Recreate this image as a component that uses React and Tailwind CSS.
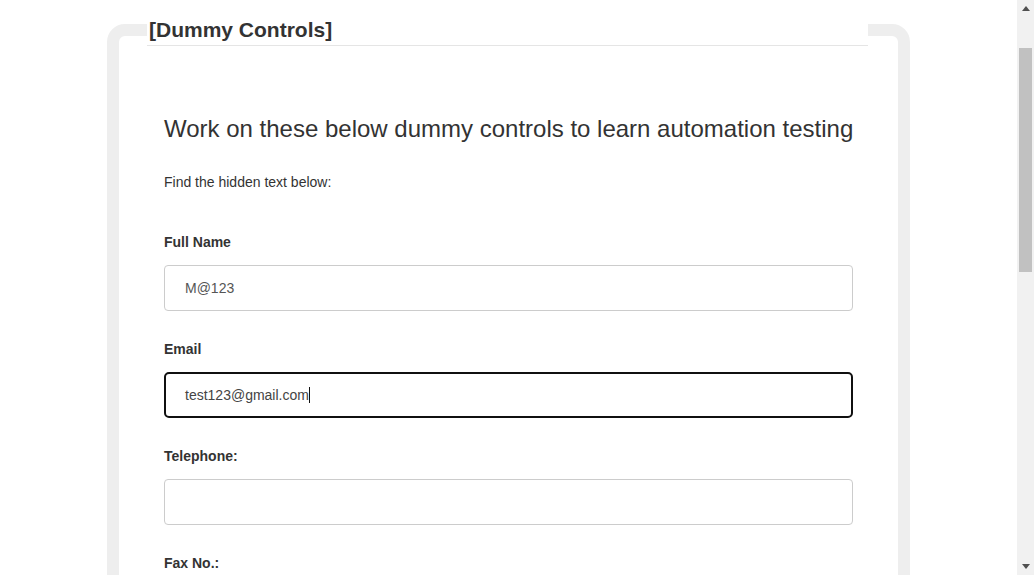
import React from "react";

function Field({ label, children }) {
  return (
    <div className="mb-[28px]">
      <label className="block text-[14px] leading-[20px] font-bold text-[#333] mb-[13px]">
        {label}
      </label>
      {children}
    </div>
  );
}

function ScrollBar() {
  return (
    <div className="w-[17px] h-full bg-[#f1f1f1] flex flex-col items-center shrink-0">
      <div className="h-[17px] w-full flex items-center justify-center">
        <svg width="8" height="5" viewBox="0 0 8 5">
          <path d="M0 5 L4 0 L8 5 Z" fill="#505050" />
        </svg>
      </div>
      <div className="mt-[31px] w-[13px] h-[224px] bg-[#c1c1c1]" />
      <div className="flex-1" />
      <div className="h-[17px] w-full flex items-center justify-center">
        <svg width="8" height="5" viewBox="0 0 8 5">
          <path d="M0 0 L8 0 L4 5 Z" fill="#505050" />
        </svg>
      </div>
    </div>
  );
}

export default function App() {
  return (
    <div
      className="h-[575px] w-[1034px] flex overflow-hidden bg-white text-[#333]"
      style={{ fontFamily: '"Liberation Sans", Arial, sans-serif' }}
    >
      <div className="flex-1 overflow-hidden">
        <fieldset className="w-[803px] min-w-0 mx-auto mt-[14px] border-[12px] border-[#eeeeee] rounded-[18px] px-[28px]">
          <legend className="w-[721px] pl-[2px] bg-white border-b border-[#e5e5e5] text-[21px] leading-[31px] font-bold text-[#333]">
            [Dummy Controls]
          </legend>
          <div className="pt-[70px] px-[17px]">
            <h2 className="text-[24px] leading-[26px] font-normal text-[#333] whitespace-nowrap">
              Work on these below dummy controls to learn automation testing
            </h2>
            <p className="mt-[30px] text-[14px] leading-[20px] text-[#333]">
              Find the hidden text below:
            </p>
            <div className="mt-[40px]">
              <Field label="Full Name">
                <input
                  readOnly
                  value="M@123"
                  className="w-full h-[46px] border border-[#cccccc] rounded-[4px] pl-[20px] text-[14px] text-[#555] outline-none"
                />
              </Field>
              <Field label="Email">
                <div className="w-full h-[46px] border-2 border-[#101010] rounded-[5px] pl-[19px] text-[14px] text-[#444] flex items-center">
                  <span>test123@gmail.com</span>
                  <span className="w-[1px] h-[16px] bg-[#111]" />
                </div>
              </Field>
              <Field label="Telephone:">
                <input
                  readOnly
                  value=""
                  className="w-full h-[46px] border border-[#cccccc] rounded-[4px] pl-[20px] text-[14px] text-[#555] outline-none"
                />
              </Field>
              <Field label="Fax No.:">
                <input
                  readOnly
                  value=""
                  className="w-full h-[46px] border border-[#cccccc] rounded-[4px] pl-[20px] text-[14px] text-[#555] outline-none"
                />
              </Field>
            </div>
          </div>
        </fieldset>
      </div>
      <ScrollBar />
    </div>
  );
}
